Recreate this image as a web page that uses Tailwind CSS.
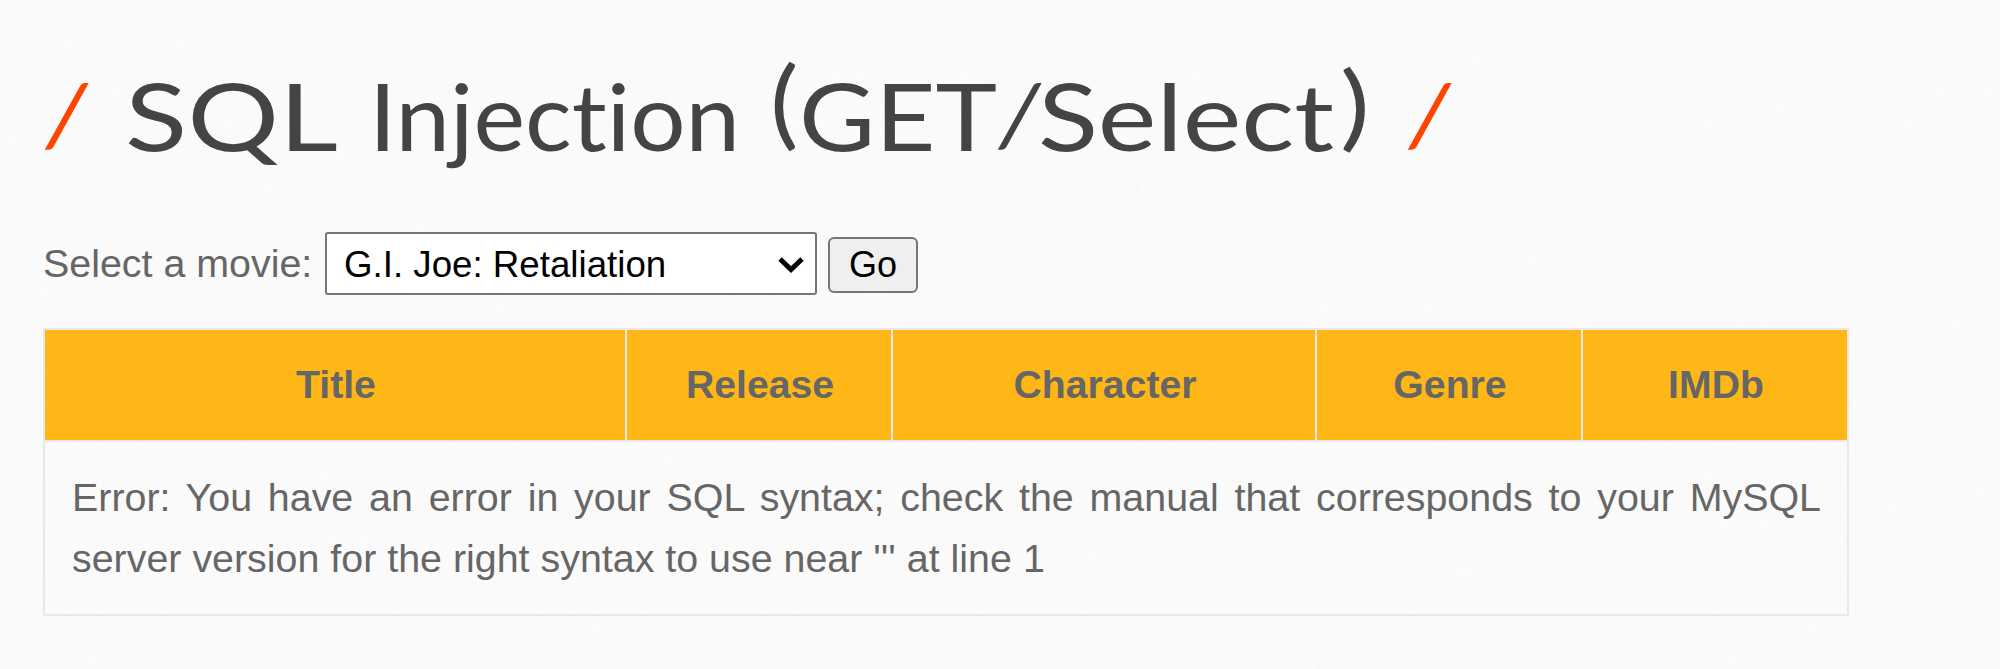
<!DOCTYPE html>
<html lang="en">
<head>
<meta charset="utf-8">
<title>SQL Injection (GET/Select)</title>
<script src="https://cdn.jsdelivr.net/npm/@tailwindcss/browser@4"></script>
</head>
<body class="relative h-[669px] overflow-hidden bg-[#fbfbfb] font-['Liberation_Sans',Arial,sans-serif] text-[39.4px] leading-[61px] text-[#666666]">
<!-- paper texture -->
<svg class="absolute inset-0 -z-10 h-full w-full" aria-hidden="true">
  <filter id="paper" x="0" y="0" width="100%" height="100%">
    <feTurbulence type="fractalNoise" baseFrequency="0.12 0.06" numOctaves="3" seed="4"/>
    <feColorMatrix values="0 0 0 0 0.6  0 0 0 0 0.6  0 0 0 0 0.6  0.07 0 0 0 -0.02"/>
  </filter>
  <rect width="100%" height="100%" filter="url(#paper)"/>
</svg>
<main class="ml-[43px] w-[1806px]">
  <h1 class="h-[232px]">
    <!-- each word is stretched to its own width -->
    <svg class="block h-[200px] w-[1500px] overflow-visible font-[Lato,sans-serif] text-[93px] [font-variant-ligatures:none]" viewBox="43 0 1500 200" fill="#444444">
      <text fill="#ff4400" transform="translate(42 146) skewX(-6) scale(1.03 .92)">/</text>
      <text x="125" y="151" textLength="213" lengthAdjust="spacingAndGlyphs">SQL</text>
      <text x="369" y="151" textLength="371" lengthAdjust="spacingAndGlyphs">Injection</text>
      <text transform="translate(770 137) scale(1.15 1.05)">(</text>
      <text x="799" y="151" textLength="198" lengthAdjust="spacingAndGlyphs">GET</text>
      <text transform="translate(995 146) skewX(-6) scale(1.03 .92)">/</text>
      <text x="1038" y="151" textLength="296" lengthAdjust="spacingAndGlyphs">Select</text>
      <text transform="translate(1340 139) scale(1.2 1)">)</text>
      <text fill="#ff4400" transform="translate(1405 146) skewX(-6) scale(1.03 .92)">/</text>
    </svg>
  </h1>
  <form class="flex h-[96px] items-start" onsubmit="return false">
    <label class="w-[282px] shrink-0 pt-px">Select a movie:</label>
    <div class="flex h-[63px] w-[492px] items-center justify-between rounded-[3px] border-2 border-[#767676] bg-white pr-[11px] pl-[17px] text-[36.7px] text-black">
      <span class="pt-[2px]">G.I. Joe: Retaliation</span>
      <svg class="mt-[2px] h-[17px] w-[26px]" viewBox="0 0 26 17" fill="none" stroke="#000" stroke-width="5"><path d="M2 3l11 10.500L24 3"/></svg>
    </div>
    <button class="mt-[5px] ml-[11px] flex h-[56px] w-[90px] items-center justify-center rounded-[6px] border-2 border-[#767676] bg-[#efefef] pb-px text-[36px] text-black">Go</button>
  </form>
  <table class="h-[288px] w-[1806px] table-fixed border-collapse">
    <colgroup><col class="w-[582px]"><col class="w-[266px]"><col class="w-[424px]"><col class="w-[266px]"><col class="w-[266px]"></colgroup>
    <thead>
      <tr class="h-[112px] bg-[#ffb717] text-[39.2px] font-bold">
        <th class="border-2 border-[#e8e8ea] p-0 pb-[2px] pl-[2px]">Title</th>
        <th class="border-2 border-[#e8e8ea] p-0 pb-[2px] pl-[2px]">Release</th>
        <th class="border-2 border-[#e8e8ea] p-0 pb-[2px] pl-[2px]">Character</th>
        <th class="border-2 border-[#e8e8ea] p-0 pb-[2px] pl-[2px]">Genre</th>
        <th class="border-2 border-[#e8e8ea] p-0 pb-[2px] pl-[2px]">IMDb</th>
      </tr>
    </thead>
    <tbody>
      <tr>
        <td colspan="5" class="border-2 border-[#e8e8ea] py-0 pr-[26px] pl-[27px] text-justify">Error: You have an error in your SQL syntax; check the manual that corresponds to your MySQL server version for the right syntax to use near ''' at line 1</td>
      </tr>
    </tbody>
  </table>
</main>
</body>
</html>
